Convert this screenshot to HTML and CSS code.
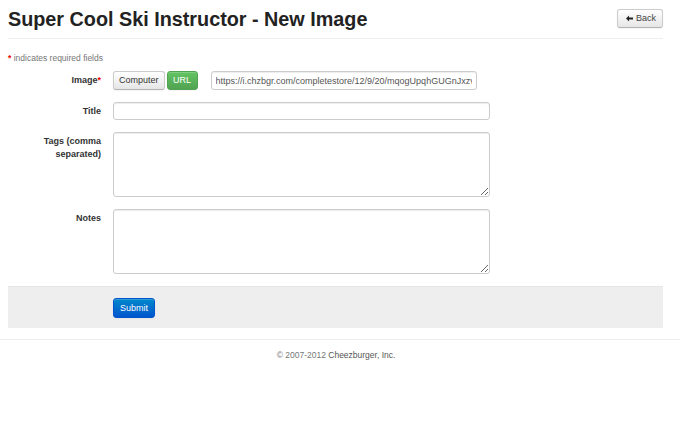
FILE: index.html
```html
<!DOCTYPE html>
<html lang="en">
<head>
  <meta charset="UTF-8">
  <title>Super Cool Ski Instructor - New Image</title>
  <link rel="stylesheet" href="styles.css">
</head>
<body>
  <div class="page">
    <header class="page-header">
      <h1>Super Cool Ski Instructor - New Image</h1>
      <a class="btn btn-back" href="#">
        <svg class="icon-arrow" width="8" height="7" viewBox="0 0 8 7"><path d="M0 3.5 L3.5 0 L3.5 2.3 L8 2.3 L8 4.7 L3.5 4.7 L3.5 7 Z" fill="#222"/></svg>
        Back
      </a>
    </header>

    <p class="required-note"><span class="req">*</span> indicates required fields</p>

    <form class="form-horizontal">
      <div class="control-group">
        <label class="control-label">Image<span class="req">*</span></label>
        <div class="controls controls-inline">
          <div class="btn-group">
            <button type="button" class="btn">Computer</button>
            <button type="button" class="btn btn-success">URL</button>
          </div>
          <input type="text" class="input-url" value="https://i.chzbgr.com/completestore/12/9/20/mqogUpqhGUGnJxzvdwMd1w2.jpg">
        </div>
      </div>

      <div class="control-group">
        <label class="control-label">Title</label>
        <div class="controls">
          <input type="text" class="input-wide">
        </div>
      </div>

      <div class="control-group">
        <label class="control-label">Tags (comma separated)</label>
        <div class="controls">
          <textarea class="input-wide"></textarea>
        </div>
      </div>

      <div class="control-group">
        <label class="control-label">Notes</label>
        <div class="controls">
          <textarea class="input-wide"></textarea>
        </div>
      </div>

      <div class="form-actions">
        <button type="submit" class="btn btn-primary">Submit</button>
      </div>
    </form>
  </div>

  <footer class="footer">
    <p>&copy; 2007-2012 <a href="#">Cheezburger, Inc.</a></p>
  </footer>
</body>
</html>
```

FILE: styles.css
```css
body {
  font-family: "Liberation Sans", Arial, sans-serif;
  font-size: 9px;
  color: #333;
  background: #fff;
  margin: 0;
}

.page {
  width: 655px;
  margin-left: 8px;
}

.page-header {
  display: flex;
  align-items: flex-start;
  justify-content: space-between;
  height: 38px;
  border-bottom: 1px solid #eee;
}

.page-header h1 {
  margin: 7px 0 0;
  font-size: 19.8px;
  font-weight: bold;
  color: #222;
  line-height: 24px;
}

.btn {
  display: inline-block;
  box-sizing: border-box;
  font-family: inherit;
  font-size: 9px;
  line-height: 11px;
  color: #333;
  text-decoration: none;
  padding: 3px 5px;
  border: 1px solid #ccc;
  border-bottom-color: #b3b3b3;
  border-radius: 3px;
  background: linear-gradient(#fff, #e6e6e6);
  box-shadow: inset 0 1px 0 rgba(255, 255, 255, 0.2), 0 1px 2px rgba(0, 0, 0, 0.05);
  cursor: pointer;
}

.btn-back {
  display: flex;
  align-items: center;
  gap: 3px;
  margin-top: 9px;
  padding: 3px 6px 3px 8px;
  height: 19px;
  width: 46px;
  color: #444;
}

.icon-arrow {
  display: block;
}

.btn-success {
  color: #fff;
  border-color: #51a351;
  background: linear-gradient(#62c462, #51a351);
  margin-left: 2px;
  padding: 3px 0;
  width: 31px;
  text-align: center;
}

.btn-primary {
  color: #fff;
  border-color: #0055cc;
  background: linear-gradient(#0088cc, #0055cc);
  padding: 3px 6px;
  height: 20px;
  width: 42px;
}

.required-note {
  margin: 14px 0 0;
  color: #777;
  font-size: 8.5px;
  line-height: 10px;
}

.req {
  color: #e00;
  font-weight: bold;
}

.form-horizontal {
  margin-top: 8px;
}

.control-group {
  display: flex;
  align-items: flex-start;
  margin-bottom: 12px;
}

.control-label {
  width: 93px;
  flex: none;
  text-align: right;
  font-weight: bold;
  color: #333;
  line-height: 13px;
  padding-top: 3px;
}

.controls {
  margin-left: 12px;
}

.controls-inline {
  display: flex;
  align-items: center;
}

.btn-group {
  display: flex;
}

.btn-group .btn {
  height: 19px;
}

input[type="text"],
textarea {
  display: block;
  box-sizing: border-box;
  font-family: inherit;
  font-size: 9px;
  color: #555;
  border: 1px solid #ccc;
  border-radius: 3px;
  box-shadow: inset 0 1px 1px rgba(0, 0, 0, 0.075);
  padding: 2px 4px;
  margin: 0;
}

.controls .input-url {
  width: 266px;
  height: 19px;
  margin-left: 13px;
}

.input-wide {
  width: 377px;
}

input.input-wide {
  height: 18px;
}

textarea.input-wide {
  height: 65px;
  resize: vertical;
}

.form-actions {
  background: #eee;
  border-top: 1px solid #e5e5e5;
  padding: 11px 0 0 105px;
  height: 30px;
}

.footer {
  margin-top: 11px;
  border-top: 1px solid #eee;
  text-align: center;
  color: #777;
  font-size: 8.5px;
}

.footer p {
  margin: 10px 8px 0 0;
  line-height: 10px;
}

.footer a {
  color: #555;
  text-decoration: none;
}
```
